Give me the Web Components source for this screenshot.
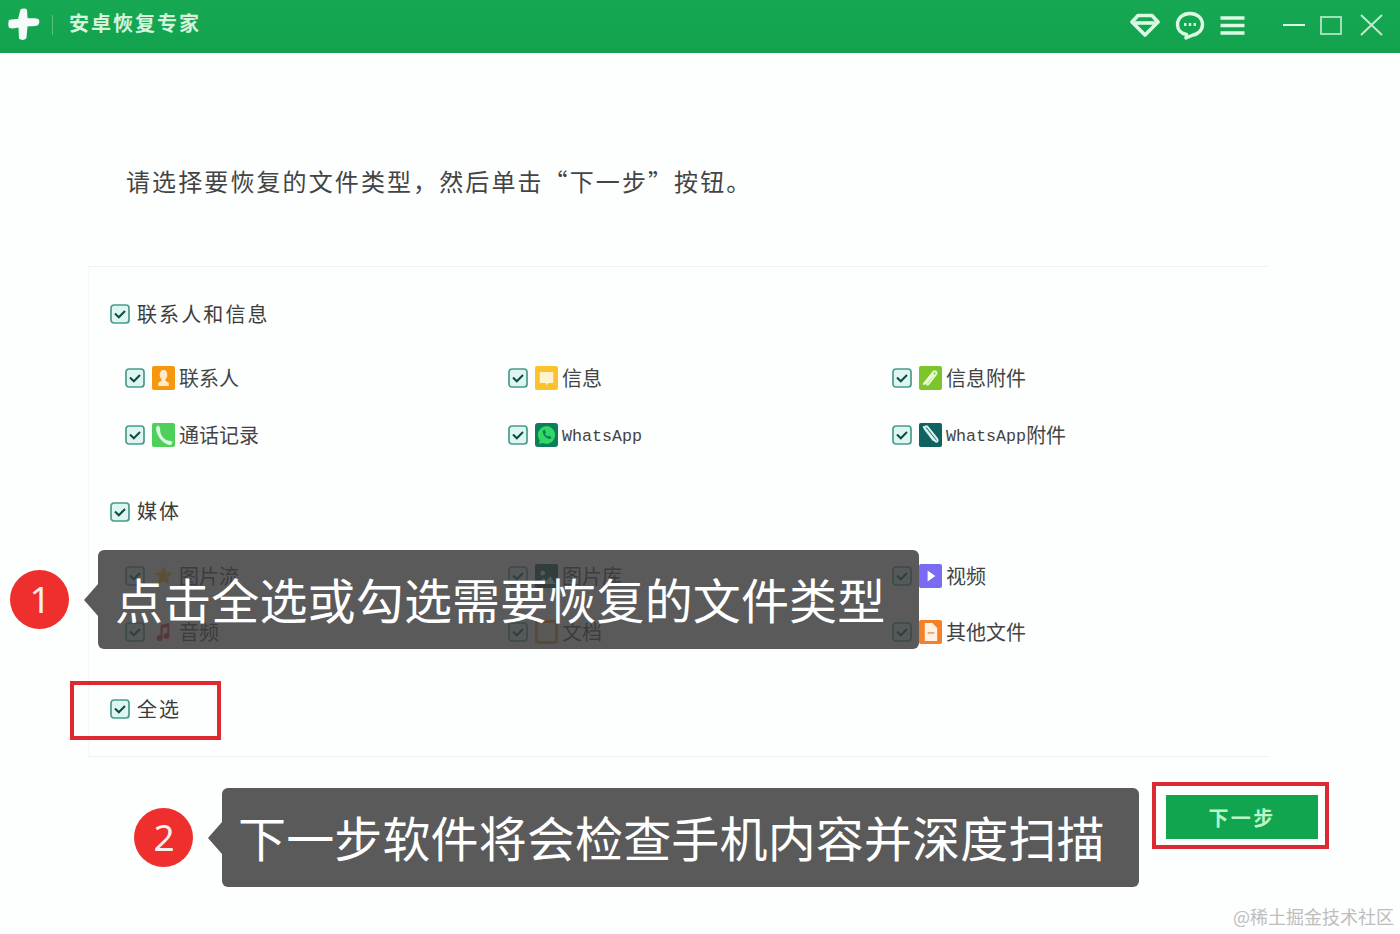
<!DOCTYPE html>
<html lang="zh-CN">
<head>
<meta charset="utf-8">
<title>安卓恢复专家</title>
<style>
  html, body { margin: 0; height: 100%; background: #fdfefe; }
  body { font-family: "Noto Sans CJK SC", "Noto Sans", sans-serif; overflow: hidden; }
</style>
</head>
<body>
<recovery-page></recovery-page>

<script>
const ICONS = {
  contacts: `<rect width="24" height="24" rx="2" fill="#f7960f"/><path d="M12 4c2.700 0 4 2.100 4 4.800 0 2-.9 3.600-2 4.500v1.500l3.500 2V20h-11v-3.200l3.500-2v-1.500c-1.100-.9-2-2.500-2-4.500C8 6.100 9.300 4 12 4z" fill="#ffeacb"/>`,
  calls: `<rect width="24" height="24" rx="2" fill="#4fcf5c"/><path d="M6 2.500c3 1 2.500 4 2.500 5.500.5 4 4 8.500 8 9.500 1.500.4 3 0 5 1.500l-1.500 3c-6 .5-15-7-16-17z" fill="#d9fadc"/>`,
  messages: `<rect width="24" height="24" rx="2" fill="#fbc32a"/><path d="M5 6h14v11h-5l-2.500 2.500V17H5z" fill="#fff3cf"/>`,
  whatsapp: `<rect width="24" height="24" rx="3" fill="#0f7d5c"/><circle cx="12" cy="12" r="9" fill="#2fd964"/><path d="M4 21l1.500-5 3.500 3.500z" fill="#2fd964"/><path d="M8.500 7.500c-1 1.500 0 4 2 6s4.500 3 6 2l.5-1.500-2.500-1.500-1 1c-1.500-.5-2.500-1.500-3-3l1-1L10 6.500z" fill="#0f7d5c"/>`,
  attach: `<rect width="24" height="24" rx="2" fill="#7cc52d"/><path d="M5 18L15 6c1.500-1.800 4-.2 3 2l-8 10c-1 1.200-3 .2-2-1.500l7-8" fill="none" stroke="#eafbd6" stroke-width="2" stroke-linecap="round"/>`,
  whatsappAttach: `<rect width="24" height="24" rx="2" fill="#0e6360"/><path d="M5 4l12 14c1.500 1.800 3.500-.2 2-2L9 4C7.500 2.500 5 4 6 6l9 11" fill="none" stroke="#d8f1ee" stroke-width="2" stroke-linecap="round"/>`,
  stream: `<path d="M12 2l2.800 6.300 6.700.7-5 4.600 1.400 6.800L12 17l-5.900 3.400 1.400-6.800-5-4.600 6.700-.7z" fill="#f7c21d"/>`,
  library: `<rect width="24" height="24" rx="2" fill="#0a4f4d"/><circle cx="8" cy="9" r="2.500" fill="#d8f1ee"/><path d="M3 20l6-6 3 3 4-5 5 8z" fill="#d8f1ee"/>`,
  video: `<rect width="24" height="24" rx="2" fill="#7a6cf2"/><path d="M9 6.500l8 5.500-8 5.500z" fill="#fff"/>`,
  audio: `<path d="M9 5l9-2v13a3 3 0 1 1-2-2.800V7L11 8v10a3 3 0 1 1-2-2.800z" fill="#e2202c"/>`,
  docs: `<rect x="1.500" y="1.500" width="21" height="21" rx="2" fill="#fff6e3" stroke="#f29a1a" stroke-width="3"/>`,
  other: `<rect width="24" height="24" rx="2" fill="#f4802a"/><path d="M6 3h8l5 5v13H6z" fill="#fff1e4"/><rect x="9" y="12" width="7" height="1.800" fill="#f4a36a"/>`
};

class CheckBox extends HTMLElement {
  connectedCallback() {
    this.attachShadow({ mode: 'open' });
    this.shadowRoot.innerHTML = `
      <style>
        :host { display: block; width: 20px; height: 20px; flex: none; }
        svg { display: block; }
      </style>
      <svg width="20" height="20" viewBox="0 0 20 20">
        <rect x="1" y="1" width="18" height="18" rx="3" fill="#ddf6f1" stroke="#4a9a8a" stroke-width="1.700"/>
        <path d="M5 9.500l3.800 3.800L15 7" fill="none" stroke="#114a43" stroke-width="2"/>
      </svg>`;
  }
}

class GroupHead extends HTMLElement {
  connectedCallback() {
    this.attachShadow({ mode: 'open' });
    this.shadowRoot.innerHTML = `
      <style>
        :host { display: flex; align-items: center; gap: 7px; height: 28px; margin-left: 21px;
                font-size: 20px; letter-spacing: 2.100px; color: #3c3c3c; }
        .label { padding-bottom: 2px; }
      </style>
      <check-box></check-box><span class="label"><slot></slot></span>`;
  }
}

class FileItem extends HTMLElement {
  connectedCallback() {
    const icon = ICONS[this.getAttribute('icon')] || '';
    this.attachShadow({ mode: 'open' });
    this.shadowRoot.innerHTML = `
      <style>
        :host { display: flex; align-items: center; height: 28px;
                font-size: 20px; color: #444; }
        svg { flex: none; display: block; margin: 0 4px 0 7px; }
        .label { display: flex; align-items: center; white-space: nowrap; padding-bottom: 1px; }
        :host([mono]) .label { font-family: "Liberation Mono", "Noto Sans CJK SC", monospace; font-size: 16.700px;
                               padding: 4px 0 0; }
        ::slotted(span) { font-family: "Noto Sans CJK SC", sans-serif; font-size: 20px; margin-bottom: 4px; }
      </style>
      <check-box></check-box>
      <svg width="23" height="24" viewBox="0 0 24 24" preserveAspectRatio="none">${icon}</svg>
      <span class="label"><slot></slot></span>`;
  }
}

class ItemGrid extends HTMLElement {
  connectedCallback() {
    this.attachShadow({ mode: 'open' });
    this.shadowRoot.innerHTML = `
      <style>
        :host { display: grid; grid-template-columns: 383px 384px 1fr; row-gap: 28.500px;
                margin: 36px 0 49px 36px; }
      </style>
      <slot></slot>`;
  }
}

class TitleBar extends HTMLElement {
  connectedCallback() {
    this.attachShadow({ mode: 'open' });
    this.shadowRoot.innerHTML = `
      <style>
        :host { display: flex; align-items: center; height: 53px; flex: none;
                background: linear-gradient(#17a853, #12a24e); color: #d4f4dc; }
        .logo { margin: 0 0 3px 8px; display: block; }
        .sep { width: 1px; height: 20px; background: #58bf80; margin: 0 16px 4px 12px; }
        .name { font-size: 20px; letter-spacing: 2px; font-weight: 700; padding-bottom: 8px; }
        .tools { margin-left: auto; display: flex; align-items: center; padding-bottom: 3px; }
        .tools svg { display: block; fill: none; stroke: #dcfae3; }
      </style>
      <svg class="logo" width="32" height="36" viewBox="0 0 32 36">
        <path d="M12.500 2.500c2-1.500 6-1.500 6.500.5l.5 8c4 .5 8-.5 11 1 1.500 2 1 5-1 6.500-3 1-7 .5-10 1l-1 11c-.5 3-6 3-7.500 1l-.5-11c-2 .5-6 1.500-9 .5-1.500-1-1.500-6-.5-8 3-1 7-1 9-1z" fill="#f5fbf6"/>
      </svg>
      <div class="sep"></div>
      <div class="name">安卓恢复专家</div>
      <div class="tools">
        <svg width="30" height="24" viewBox="0 0 30 24" stroke-width="3.600" stroke-linejoin="round">
          <path d="M8 2.500h14l6 6.500-13 13L2 9z"/><path d="M5 10h20"/>
        </svg>
        <svg style="margin-left:15px" width="30" height="29" viewBox="0 0 30 29" stroke-width="3.400" stroke-linejoin="round">
          <path d="M15 2.500c7 0 12.500 4.500 12.500 11 0 6-5 10-9.500 10.500L11 27l.5-3.500C6 22.500 2.500 18.500 2.500 13.500 2.500 7 8 2.500 15 2.500z"/>
          <path d="M9 13.500h2.400M13.800 13.500h2.400M18.600 13.500h2.400" stroke-width="3"/>
        </svg>
        <svg style="margin-left:15px" width="25" height="19" viewBox="0 0 25 19" stroke-width="3.600">
          <path d="M0.500 2h24M0.500 9.500h24M0.500 17h24"/>
        </svg>
        <svg style="margin-left:38px" width="22" height="4" viewBox="0 0 22 4" stroke-width="2">
          <path d="M0 2h22"/>
        </svg>
        <svg style="margin-left:15px" width="22" height="19" viewBox="0 0 22 19" stroke-width="2" opacity=".7">
          <rect x="1" y="1" width="20" height="17"/>
        </svg>
        <svg style="margin:0 17px 0 18px" width="23" height="22" viewBox="0 0 23 22" stroke-width="2" opacity=".85">
          <path d="M1 1l21 20M22 1L1 21"/>
        </svg>
      </div>`;
  }
}

class NextButton extends HTMLElement {
  connectedCallback() {
    this.attachShadow({ mode: 'open' });
    this.shadowRoot.innerHTML = `
      <style>
        :host { display: flex; align-items: center; justify-content: center; width: 152px; height: 44px;
                background: #12a550; color: #b9f5c6; font-size: 20px; letter-spacing: 2.400px; font-weight: 700; }
      </style>
      <slot></slot>`;
  }
}

// annotation layers sit on top of the app screenshot
class CalloutTip extends HTMLElement {
  connectedCallback() {
    this.attachShadow({ mode: 'open' });
    this.shadowRoot.innerHTML = `
      <style>
        :host { position: absolute; box-sizing: border-box; height: 99px; display: flex; align-items: center;
                background: rgba(58, 58, 60, .84); border-radius: 6px; color: #fff;
                font-size: 48px; letter-spacing: .15px; white-space: nowrap; padding-bottom: 4px; }
        .arrow { position: absolute; left: -14px; top: 50%; margin-top: -16px; width: 0; height: 0;
                 border-style: solid; border-width: 16px 14px 16px 0;
                 border-color: transparent rgba(58, 58, 60, .84) transparent transparent; }
      </style>
      <div class="arrow"></div><slot></slot>`;
  }
}

class StepBadge extends HTMLElement {
  connectedCallback() {
    this.attachShadow({ mode: 'open' });
    this.shadowRoot.innerHTML = `
      <style>
        :host { position: absolute; width: 59px; height: 59px; border-radius: 50%; background: #ee2f2d;
                display: flex; align-items: center; justify-content: center; color: #fbeeee;
                font-family: "Noto Sans", sans-serif; font-size: 37px; line-height: 1; padding-bottom: 0; }
        span { display: block; margin: -3px 0 0 1px; }
      </style>
      <span><slot></slot></span>`;
  }
}

class RedFrame extends HTMLElement {
  connectedCallback() {
    this.attachShadow({ mode: 'open' });
    this.shadowRoot.innerHTML = `
      <style>
        :host { position: absolute; box-sizing: border-box; border: 4px solid #dd2a30; }
      </style>`;
  }
}

class RecoveryPage extends HTMLElement {
  connectedCallback() {
    this.attachShadow({ mode: 'open' });
    this.shadowRoot.innerHTML = `
      <style>
        :host { display: flex; flex-direction: column; position: relative; height: 934px; overflow: hidden; color: #3c3c3c; }
        .intro { margin: 110px 0 67px 126px; height: 36px; line-height: 36px; font-size: 24px;
                 letter-spacing: 2.100px; color: #444; white-space: nowrap; }
        .panel { margin: 0 132px 0 88px; padding: 33px 0; border: solid #edf3f3; border-width: 1px 0;
                 border-left: 1px solid #f4f8f8; height: 423px; }
        .foot { display: flex; justify-content: flex-end; padding-right: 82px; margin-top: 38px; }
        .cn { font-family: "Noto Sans CJK SC", sans-serif; font-size: 20px; }
        .mark { position: absolute; right: 6px; top: 903px; font-size: 18px; color: #bdbdbd; white-space: nowrap; }
      </style>
      <title-bar></title-bar>
      <div class="intro">请选择要恢复的文件类型，然后单击“下一步”按钮。</div>
      <div class="panel">
        <group-head>联系人和信息</group-head>
        <item-grid>
          <file-item icon="contacts">联系人</file-item>
          <file-item icon="messages">信息</file-item>
          <file-item icon="attach">信息附件</file-item>
          <file-item icon="calls">通话记录</file-item>
          <file-item icon="whatsapp" mono>WhatsApp</file-item>
          <file-item icon="whatsappAttach" mono>WhatsApp<span class="cn">附件</span></file-item>
        </item-grid>
        <group-head>媒体</group-head>
        <item-grid>
          <file-item icon="stream">图片流</file-item>
          <file-item icon="library">图片库</file-item>
          <file-item icon="video">视频</file-item>
          <file-item icon="audio">音频</file-item>
          <file-item icon="docs">文档</file-item>
          <file-item icon="other">其他文件</file-item>
        </item-grid>
        <group-head>全选</group-head>
      </div>
      <div class="foot"><next-button>下一步</next-button></div>

      <step-badge style="left:10px; top:570px">1</step-badge>
      <callout-tip style="left:98px; top:550px; width:821px; padding-left:17px">点击全选或勾选需要恢复的文件类型</callout-tip>
      <red-frame style="left:70px; top:681px; width:151px; height:59px"></red-frame>

      <step-badge style="left:134px; top:808px">2</step-badge>
      <callout-tip style="left:222px; top:788px; width:917px; padding-left:16px">下一步软件将会检查手机内容并深度扫描</callout-tip>
      <red-frame style="left:1152px; top:782px; width:177px; height:67px"></red-frame>

      <div class="mark">@稀土掘金技术社区</div>`;
  }
}

customElements.define('check-box', CheckBox);
customElements.define('group-head', GroupHead);
customElements.define('file-item', FileItem);
customElements.define('item-grid', ItemGrid);
customElements.define('title-bar', TitleBar);
customElements.define('next-button', NextButton);
customElements.define('callout-tip', CalloutTip);
customElements.define('step-badge', StepBadge);
customElements.define('red-frame', RedFrame);
customElements.define('recovery-page', RecoveryPage);
</script>
</body>
</html>
